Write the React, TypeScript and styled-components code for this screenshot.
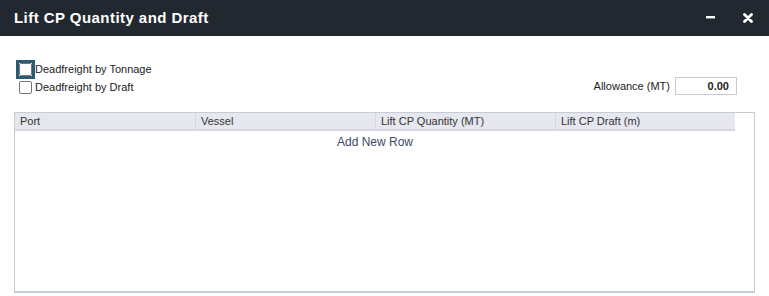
import styled, { createGlobalStyle } from "styled-components";

const GlobalStyle = createGlobalStyle`
  html, body {
    margin: 0;
    padding: 0;
    background: #ffffff;
  }
  body {
    font-family: "Liberation Sans", Arial, sans-serif;
    font-size: 11px;
    color: #222;
  }
`;

const columns = ["Port", "Vessel", "Lift CP Quantity (MT)", "Lift CP Draft (m)"];

function App() {
  return (
    <>
      <GlobalStyle />
      <Dialog>
        <TitleBar>
          <Title>Lift CP Quantity and Draft</Title>
          <TitleButtons>
            <IconButton aria-label="minimize">
              <svg width="9" height="3" viewBox="0 0 9 3">
                <rect x="0" y="0" width="9" height="2.4" fill="#fff" />
              </svg>
            </IconButton>
            <IconButton aria-label="close">
              <svg width="10" height="10" viewBox="0 0 10 10">
                <path d="M1.5 1.5 L8.5 8.5 M8.5 1.5 L1.5 8.5" stroke="#fff" strokeWidth="2.8" strokeLinecap="round" />
              </svg>
            </IconButton>
          </TitleButtons>
        </TitleBar>

        <Body>
          <OptionsRow>
            <Checks>
              <CheckLabel>
                <FocusRing $focused>
                  <CheckBox type="checkbox" />
                </FocusRing>
                Deadfreight by Tonnage
              </CheckLabel>
              <CheckLabel>
                <FocusRing>
                  <CheckBox type="checkbox" />
                </FocusRing>
                Deadfreight by Draft
              </CheckLabel>
            </Checks>
            <Allowance>
              <span>Allowance (MT)</span>
              <NumberInput defaultValue="0.00" />
            </Allowance>
          </OptionsRow>

          <Grid>
            <HeaderRow>
              {columns.map((c) => (
                <HeaderCell key={c}>{c}</HeaderCell>
              ))}
            </HeaderRow>
            <AddRow>Add New Row</AddRow>
          </Grid>
        </Body>
      </Dialog>
    </>
  );
}

const Dialog = styled.div`
  width: 769px;
  height: 296px;
  display: flex;
  flex-direction: column;
  background: #fff;
`;

const TitleBar = styled.div`
  height: 36px;
  flex: none;
  background: #22282f;
  display: flex;
  align-items: center;
  justify-content: space-between;
  padding: 0 12px 0 14px;
  box-sizing: border-box;
`;

const Title = styled.div`
  color: #fff;
  font-family: "Liberation Sans", Arial, sans-serif;
  font-weight: bold;
  font-size: 15px;
  letter-spacing: 0.45px;
  margin-top: -1px;
`;

const TitleButtons = styled.div`
  display: flex;
  align-items: center;
  gap: 20px;
`;

const IconButton = styled.button`
  background: none;
  border: none;
  padding: 0;
  width: 18px;
  height: 18px;
  display: flex;
  align-items: center;
  justify-content: center;
  cursor: pointer;
  margin-top: -1px;
`;

const Body = styled.div`
  flex: 1;
  display: flex;
  flex-direction: column;
  padding: 27px 14px 3px 14px;
  box-sizing: border-box;
`;

const OptionsRow = styled.div`
  display: flex;
  justify-content: space-between;
  align-items: flex-end;
  padding-right: 18px;
  margin-bottom: 18px;
`;

const Checks = styled.div`
  display: flex;
  flex-direction: column;
  gap: 5px;
`;

const CheckLabel = styled.label`
  display: flex;
  align-items: center;
  color: #222;
  font-size: 11px;
  line-height: 13px;
`;

const FocusRing = styled.span<{ $focused?: boolean }>`
  display: flex;
  width: 13px;
  height: 13px;
  margin: 0 3px 0 5px;
  outline: ${(p) => (p.$focused ? "3px solid #2b5b74" : "none")};
`;

const CheckBox = styled.input`
  appearance: none;
  width: 13px;
  height: 13px;
  margin: 0;
  border: 1px solid #767676;
  border-radius: 2px;
  background: #fff;
  box-sizing: border-box;
  outline: none;
`;

const Allowance = styled.div`
  display: flex;
  align-items: center;
  gap: 5px;
  color: #222;
  margin-bottom: -1px;
`;

const NumberInput = styled.input`
  width: 62px;
  height: 18px;
  box-sizing: border-box;
  border: 1px solid #c8ccd2;
  text-align: right;
  padding: 0 7px;
  font-family: "Liberation Sans", Arial, sans-serif;
  font-size: 11px;
  font-weight: bold;
  color: #222;
`;

const Grid = styled.div`
  flex: 1;
  border: 1px solid #c5ccd6;
  border-bottom-width: 2px;
  display: flex;
  flex-direction: column;
  padding-right: 19px;
`;

const HeaderRow = styled.div`
  display: grid;
  grid-template-columns: repeat(4, 1fr);
  background: #e6e7ef;
  border-bottom: 2px solid #d3d7df;
  height: 16px;
`;

const HeaderCell = styled.div`
  padding: 1px 5px;
  color: #333;
  font-size: 11px;
  line-height: 14px;
  border-left: 1px solid #d3d7df;
  &:first-child {
    border-left: none;
  }
`;

const AddRow = styled.div`
  text-align: center;
  color: #3b4a63;
  font-size: 12px;
  padding-top: 4px;
`;

export default App;
